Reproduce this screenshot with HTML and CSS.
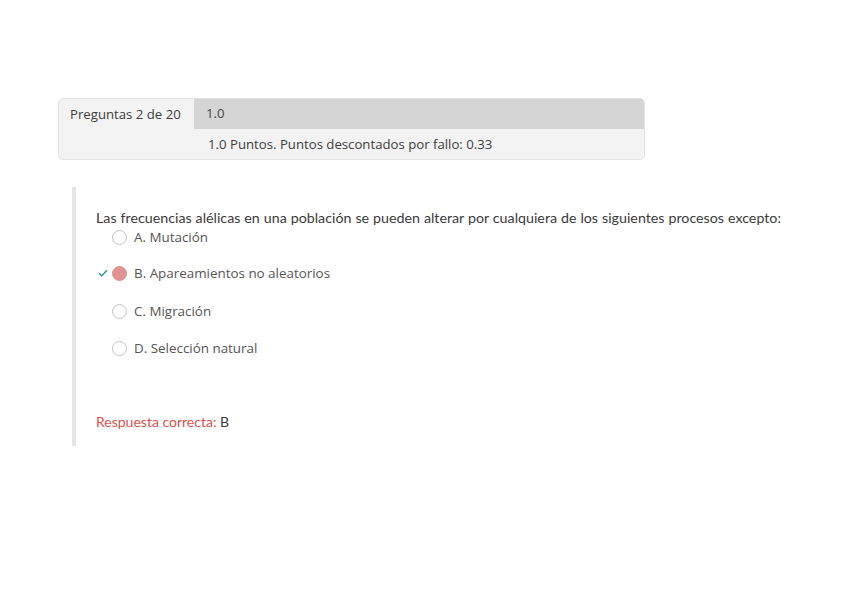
FILE: index.html
```html
<!DOCTYPE html>
<html lang="es">
<head>
  <meta charset="UTF-8">
  <title>Pregunta 2</title>
  <link rel="stylesheet" href="styles.css">
</head>
<body>
  <div class="page">
    <div class="info-box">
      <div class="info-label">Preguntas 2 de 20</div>
      <div class="info-values">
        <div class="info-score">1.0</div>
        <div class="info-points">1.0 Puntos. Puntos descontados por fallo: 0.33</div>
      </div>
    </div>

    <div class="question">
      <p class="question-text">Las frecuencias alélicas en una población se pueden alterar por cualquiera de los siguientes procesos excepto:</p>
      <ul class="options">
        <li class="option"><span class="mark"></span><span class="radio"></span>A. Mutación</li>
        <li class="option"><span class="mark">
          <svg width="10" height="8" viewBox="0 0 10 8"><path d="M1 4.2 L3.8 6.8 L9 1.2" fill="none" stroke="#2e9b8a" stroke-width="1.4"/></svg>
        </span><span class="radio selected"></span>B. Apareamientos no aleatorios</li>
        <li class="option"><span class="mark"></span><span class="radio"></span>C. Migración</li>
        <li class="option"><span class="mark"></span><span class="radio"></span>D. Selección natural</li>
      </ul>
      <p class="answer"><span class="answer-label">Respuesta correcta:</span> B</p>
    </div>
  </div>
</body>
</html>
```

FILE: styles.css
```css
* {
  margin: 0;
  padding: 0;
  box-sizing: border-box;
}

body {
  background: #ffffff;
  color: #3a3a3a;
  font-family: 'Open Sans', sans-serif;
  font-size: 13.2px;
}

.page {
  padding: 98px 0 0 58px;
}

.info-box {
  width: 587px;
  display: flex;
  background: #f3f3f3;
  border: 1px solid #e4e4e4;
  border-radius: 5px;
  overflow: hidden;
}

.info-label {
  width: 135px;
  padding: 6px 0 0 11px;
  color: #3d3d3d;
}

.info-values {
  flex: 1;
}

.info-score {
  height: 30px;
  line-height: 29px;
  background: #d5d5d5;
  padding-left: 12px;
  color: #444;
}

.info-points {
  height: 30px;
  line-height: 31px;
  padding-left: 14px;
  color: #3d3d3d;
}

.question {
  margin: 27px 0 0 14px;
  border-left: 4px solid #e6e6e6;
  padding: 21px 0 14px 20px;
  height: 259px;
}

.question-text {
  font-family: Lato, sans-serif;
  font-size: 14.25px;
  color: #3b3b3b;
  line-height: 20px;
  word-spacing: 0.3px;
}

.options {
  list-style: none;
  margin-top: -1px;
}

.option {
  display: flex;
  align-items: center;
  height: 20px;
  margin-bottom: 17px;
  font-size: 13.4px;
  color: #555;
}

.option:first-child {
  margin-bottom: 16px;
}

.option:nth-child(2) {
  margin-bottom: 18px;
}

.mark {
  width: 16px;
  display: flex;
  align-items: center;
  padding-left: 2px;
}

.radio {
  width: 15px;
  height: 15px;
  border: 1px solid #c4c4c4;
  border-radius: 50%;
  background: #fff;
  margin-right: 7px;
}

.radio.selected {
  background: #e09393;
  border-color: #e09393;
}

.answer {
  margin-top: 55px;
  font-family: Lato, sans-serif;
  font-size: 14px;
  color: #3b3b3b;
}

.answer-label {
  color: #d9534f;
}
```
